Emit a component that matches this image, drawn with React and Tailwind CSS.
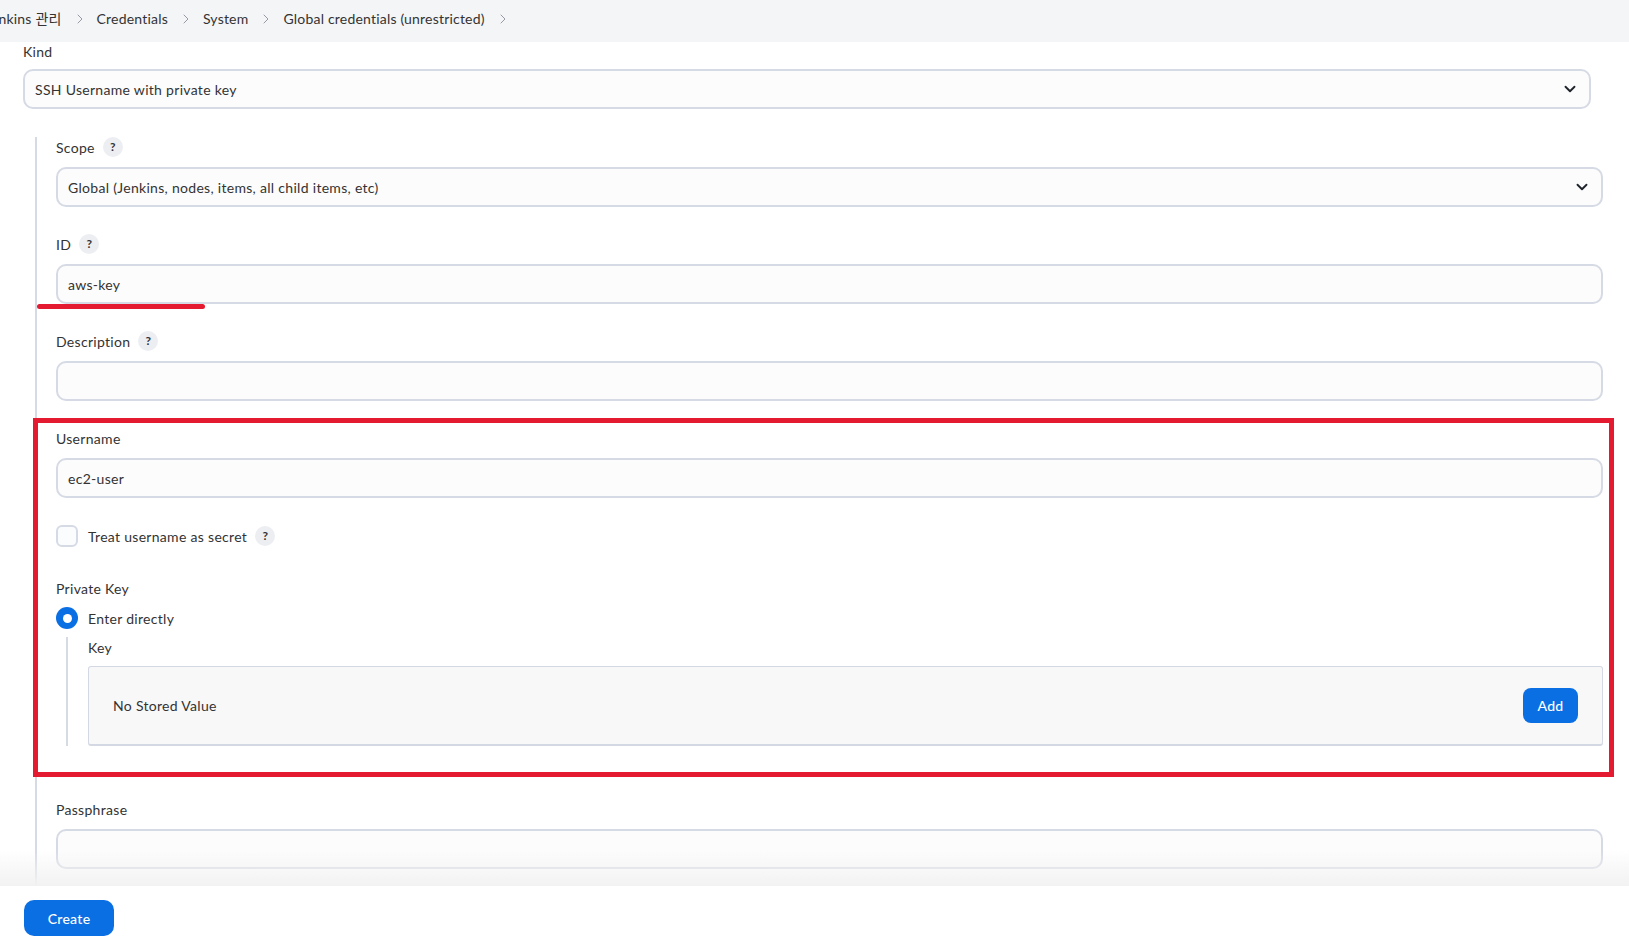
import React from "react";
import { ChevronDown, ChevronRight } from "lucide-react";

const font = { fontFamily: 'Lato, "Noto Sans CJK KR", sans-serif' };

function Help() {
  return (
    <span className="ml-[8px] inline-flex h-[20px] w-[20px] items-center justify-center rounded-full bg-[#eceef2] text-[12px] font-bold tracking-normal text-[#333]">
      ?
    </span>
  );
}

function Label({ children, help }) {
  return (
    <div className="flex h-[20px] items-center pb-[2px] text-[14px] text-[#333]">
      <span>{children}</span>
      {help && <Help />}
    </div>
  );
}

function Input({ value }) {
  return (
    <div className="flex h-[40px] items-center rounded-[10px] border-2 border-[#d6dae4] bg-[#fcfcfc] px-[10px] text-[14px] text-[#333]">
      {value}
    </div>
  );
}

function Select({ value }) {
  return (
    <div className="flex h-[40px] items-center justify-between rounded-[10px] border-2 border-[#d6dae4] bg-[#fcfcfc] pl-[10px] pr-[10px] text-[14px] text-[#333]">
      <span>{value}</span>
      <ChevronDown size={18} strokeWidth={2.5} className="text-[#20242c]" />
    </div>
  );
}

function Field({ label, help, children, className = "" }) {
  return (
    <div className={className}>
      <Label help={help}>{label}</Label>
      <div className="mt-[9px]">{children}</div>
    </div>
  );
}

function Crumb({ children, className = "" }) {
  return (
    <div className={"flex items-center " + className}>
      <span>{children}</span>
      <ChevronRight size={16} strokeWidth={1.5} className="ml-[10px] mr-[9px] text-[#959aa4]" />
    </div>
  );
}

export default function App() {
  return (
    <div style={font} className="relative flex h-[949px] w-[1629px] flex-col overflow-hidden bg-white tracking-[0.3px] text-[#333]">
      {/* Breadcrumb header */}
      <div className="flex h-[42px] shrink-0 items-center bg-[#f4f5f7] pb-[5px] text-[14px] tracking-[0.2px] text-[#333]">
        <Crumb className="-ml-[15px]">Jenkins 관리</Crumb>
        <Crumb>Credentials</Crumb>
        <Crumb>System</Crumb>
        <Crumb>Global credentials (unrestricted)</Crumb>
      </div>

      {/* Main form */}
      <div className="relative flex-1 overflow-hidden">
        <div className="pl-[23px] pr-[26px]">
          <div className="mr-[12px] mt-[0px]">
            <Label>Kind</Label>
            <div className="mt-[7px]">
              <Select value="SSH Username with private key" />
            </div>
          </div>

          <div className="ml-[12px] mt-[28px] border-l-2 border-[#d6dae4] pl-[19px] pt-[1px]">
            <Field label="Scope" help>
              <Select value="Global (Jenkins, nodes, items, all child items, etc)" />
            </Field>
            <Field label="ID" help className="mt-[28px]">
              <Input value="aws-key" />
            </Field>
            <Field label="Description" help className="mt-[28px]">
              <Input value="" />
            </Field>
            <Field label="Username" className="mt-[28px]">
              <Input value="ec2-user" />
            </Field>

            <div className="mt-[27px] flex h-[22px] items-center text-[14px]">
              <span className="h-[22px] w-[22px] rounded-[6px] border-2 border-[#d6dae4] bg-[#fbfcfd]" />
              <span className="ml-[10px]">Treat username as secret</span>
              <Help />
            </div>

            <div className="mt-[32px]">
              <Label>Private Key</Label>
              <div className="mt-[8px] flex h-[22px] items-center text-[14px]">
                <span className="flex h-[22px] w-[22px] items-center justify-center rounded-full bg-[#0b6fe4]">
                  <span className="h-[9px] w-[9px] rounded-full bg-white" />
                </span>
                <span className="ml-[10px]">Enter directly</span>
              </div>
              <div className="ml-[10px] mt-[8px] border-l-2 border-[#d6dae4] pl-[20px] pt-[1px]">
                <Label>Key</Label>
                <div className="mt-[8px] flex h-[80px] items-center justify-between rounded-[3px] border border-b-2 border-[#d3d8e2] bg-[#f8f8f8] pl-[24px] pr-[24px] text-[14px]">
                  <span>No Stored Value</span>
                  <button className="h-[35px] w-[55px] rounded-[8px] bg-[#0b6fe4] text-[14px] font-medium text-white">
                    Add
                  </button>
                </div>
              </div>
            </div>

            <Field label="Passphrase" className="mt-[54px]">
              <Input value="" />
            </Field>
            <div className="h-[40px]" />
          </div>
        </div>

        {/* annotations */}
        <div className="pointer-events-none absolute left-[37px] top-[262px] h-[5px] w-[168px] rounded-full bg-[#e41b30]" />
        <div className="pointer-events-none absolute left-[33px] top-[376px] h-[359px] w-[1581px] border-[5px] border-[#e41b30]" />

        {/* bottom fade */}
        <div className="pointer-events-none absolute bottom-0 left-0 right-0 h-[36px] bg-gradient-to-b from-[rgba(242,242,243,0)] to-[#f2f2f3]" />
      </div>

      {/* Bottom app bar */}
      <div className="flex h-[63px] shrink-0 items-start bg-white pl-[24px] pt-[14px]">
        <button className="h-[36px] w-[90px] rounded-[10px] bg-[#0b6fe4] text-[14px] font-medium text-white">
          Create
        </button>
      </div>
    </div>
  );
}
